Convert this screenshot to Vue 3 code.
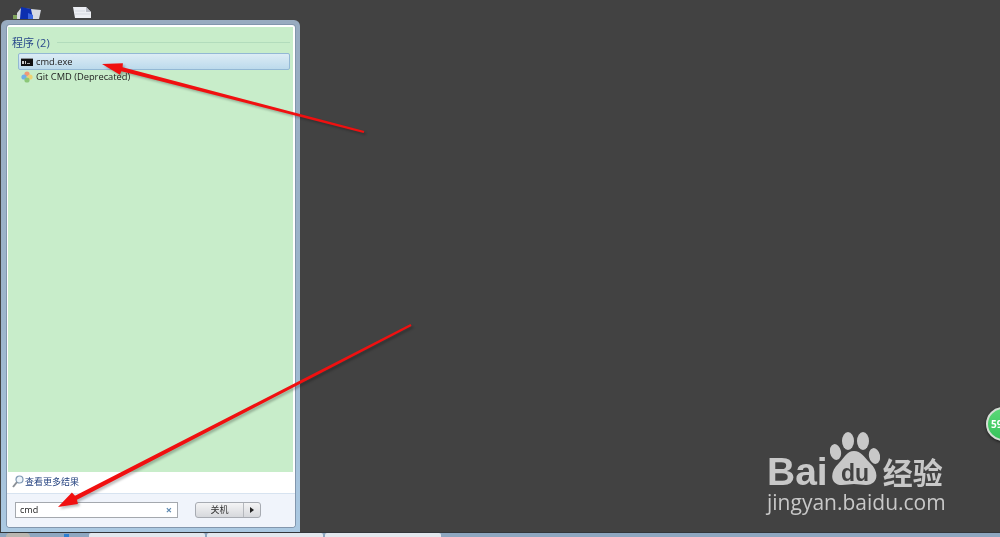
<template>
  <div class="desktop">
    <div class="work">
      <div class="icons">
        <svg width="28" height="13" viewBox="0 0 28 13">
          <rect x="0" y="8" width="4" height="4" fill="#7fa35c" />
          <path d="M4 6 L8 1 L28 3 L26 12 L4 12 Z" fill="#d6dae2" />
          <path d="M8 0 L18 2 L20 12 L7 12 Z" fill="#0c2fb0" />
          <path d="M15 6 L20 8 L20 12 L15 12 Z" fill="#3a66e0" />
        </svg>
        <svg width="18" height="12" viewBox="0 0 18 12">
          <path d="M0 0 L13 0 L18 5 L18 11 L2 11 Z" fill="#eceef3" />
          <path d="M13 0 L18 5 L13 5 Z" fill="#b9bcc6" />
          <path d="M2 4 H12 M2 7 H17" stroke="#d5d8e0" stroke-width="1" />
        </svg>
      </div>

      <div class="start-menu">
        <div class="panel">
          <div class="results">
            <div class="group-head">
              <span>程序 (2)</span>
              <i></i>
            </div>
            <div
              v-for="item in programs"
              :key="item.name"
              class="prog"
              :class="{ selected: item.selected }"
            >
              <svg v-if="item.kind === 'cmd'" width="12" height="8" viewBox="0 0 12 8">
                <rect width="12" height="8" fill="#111" />
                <rect width="12" height="1" fill="#8a8f96" />
                <rect x="1" y="3" width="2" height="3" fill="#ccc" />
                <rect x="4" y="3" width="1" height="3" fill="#ccc" />
                <rect x="6" y="5" width="3" height="1" fill="#aaa" />
              </svg>
              <svg v-else width="12" height="12" viewBox="0 0 12 12">
                <circle cx="6" cy="3" r="2.600" fill="#ef9a78" />
                <circle cx="3" cy="6" r="2.600" fill="#6fb0e8" />
                <circle cx="9" cy="6" r="2.600" fill="#ecd374" />
                <circle cx="6" cy="9" r="2.600" fill="#8cc878" />
              </svg>
              <span>{{ item.name }}</span>
            </div>
          </div>
          <div class="more">
            <svg width="12" height="13" viewBox="0 0 12 13">
              <circle cx="7.500" cy="4.500" r="3.500" fill="#eef4fa" stroke="#7f99b4" stroke-width="1.200" />
              <path d="M5 7 L1 12" stroke="#8a8f96" stroke-width="2" />
            </svg>
            <span>查看更多结果</span>
          </div>
          <div class="search-bar">
            <div class="search-box">
              <span>cmd</span>
              <b>×</b>
            </div>
            <div class="power">
              <span class="power-label">关机</span>
              <span class="power-arrow"></span>
            </div>
          </div>
        </div>
      </div>

      <div class="badge">59</div>

      <div class="watermark">
        <div class="wm-top">
          <span class="wm-bai">Bai</span>
          <svg class="wm-paw" width="50" height="54" viewBox="0 0 50 54">
            <ellipse cx="5.500" cy="20" rx="5.500" ry="8" transform="rotate(-12 5.500 20)" />
            <ellipse cx="18" cy="9" rx="6" ry="9" />
            <ellipse cx="33" cy="9" rx="6" ry="9" />
            <ellipse cx="44.500" cy="24" rx="5.500" ry="8" transform="rotate(-12 44.500 24)" />
            <path d="M24 19 C31 19 34 25 40 31 C50 40 48 53 36 53 C31 53 28 52 24 52 C20 52 17 53 12 53 C0 53 -1 40 9 31 C15 25 17 19 24 19 Z" />
            <text x="25" y="49" text-anchor="middle" class="wm-du">du</text>
          </svg>
          <span class="wm-cn">经验</span>
        </div>
        <div class="wm-url">jingyan.baidu.com</div>
      </div>

      <svg class="arrows" width="1000" height="537" viewBox="0 0 1000 537">
        <polygon points="102,64 122.900,63.200 122.600,67.200 364.300,131 363.700,133 121.400,71.200 119.900,74.800" />
        <polygon points="58,507 71.900,492.500 75,495.800 410.500,324.100 411.500,326 77,499.700 77.900,504.100" />
      </svg>
    </div>

    <div class="taskbar">
      <div class="orb"></div>
      <div class="dot"></div>
      <div class="tabs">
        <div v-for="n in 3" :key="n" class="tab"></div>
      </div>
    </div>
  </div>
</template>

<script setup>
const programs = [
  { name: 'cmd.exe', kind: 'cmd', selected: true },
  { name: 'Git CMD (Deprecated)', kind: 'git', selected: false }
]
</script>

<style>
html, body { margin: 0; background: #424242; }
</style>

<style scoped>
.desktop {
  width: 1000px;
  height: 537px;
  display: flex;
  flex-direction: column;
  overflow: hidden;
  background: #424242;
  filter: blur(0.35px);
  font-family: "Open Sans", "Noto Sans CJK SC", sans-serif;
}
.work {
  position: relative;
  flex: 1;
  border-bottom: 1px solid #33363a;
}
.icons {
  position: absolute;
  left: 13px;
  top: 7px;
  display: flex;
  gap: 32px;
}
.start-menu {
  position: absolute;
  left: 1px;
  top: 20px;
  width: 299px;
  height: 512px;
  box-sizing: border-box;
  padding: 5px 5px 5px 6px;
  border-radius: 6px 6px 0 0;
  background: linear-gradient(#98abc0, #9db6cd 60%, #abc9e2);
}
.panel {
  height: 100%;
  display: flex;
  flex-direction: column;
  border-radius: 3px;
  background: #fff;
  box-shadow: 0 0 0 1px #8296ad;
}
.results {
  flex: 1;
  margin: 2px 2px 0 1px;
  padding: 8px 4px 0 4px;
  background: #c8edca;
}
.group-head {
  display: flex;
  align-items: center;
  gap: 7px;
  height: 14px;
  margin-bottom: 4px;
  font-size: 11px;
  color: #2a4a8c;
}
.group-head i {
  flex: 1;
  height: 1px;
  margin-right: -1px;
  background: #b2dcbc;
}
.prog {
  display: flex;
  align-items: center;
  gap: 3px;
  height: 13px;
  margin-left: 6px;
  padding-left: 3px;
  font-size: 9.3px;
  color: #222;
}
.prog.selected {
  height: 15px;
  margin-right: -1px;
  padding-left: 2px;
  border: 1px solid #93b8d4;
  border-radius: 2px;
  background: linear-gradient(#dcecf5, #bcdaec);
}
.more {
  display: flex;
  align-items: center;
  gap: 1px;
  height: 19px;
  padding: 0 0 2px 5px;
  font-size: 9px;
  color: #23417f;
  background: #fff;
}
.search-bar {
  display: flex;
  align-items: center;
  height: 34px;
  box-sizing: border-box;
  padding: 0 0 2px 8px;
  border-top: 1px solid #d7e3f0;
  border-radius: 0 0 3px 3px;
  background: #f0f4fb;
}
.search-box {
  width: 163px;
  height: 16px;
  box-sizing: border-box;
  display: flex;
  align-items: center;
  justify-content: space-between;
  padding: 0 5px 0 4px;
  border: 1px solid #a4a8ae;
  background: #fff;
  font-size: 9px;
  color: #222;
}
.search-box b {
  font-size: 11px;
  font-weight: 700;
  color: #5b87b0;
}
.power {
  display: flex;
  width: 66px;
  height: 16px;
  margin-left: 17px;
  box-sizing: border-box;
  border: 1px solid #a7abb2;
  border-radius: 3px;
  background: linear-gradient(#f4f4f5, #d6d8dc);
}
.power-label {
  flex: 1;
  text-align: center;
  font-size: 9px;
  line-height: 14px;
  color: #333;
  border-right: 1px solid #b5b8bd;
}
.power-arrow {
  position: relative;
  width: 16px;
}
.power-arrow::after {
  content: "";
  position: absolute;
  left: 6px;
  top: 4px;
  border-left: 4px solid #222;
  border-top: 3px solid transparent;
  border-bottom: 3px solid transparent;
}
.badge {
  position: absolute;
  left: 986px;
  top: 407px;
  width: 34px;
  height: 34px;
  box-sizing: border-box;
  padding-left: 3px;
  border: 2px solid #d5ddd5;
  border-radius: 50%;
  background: linear-gradient(#5ad877, #38c45c);
  box-shadow: 0 1px 3px rgba(0, 0, 0, 0.6);
  font-size: 10px;
  font-weight: 700;
  line-height: 30px;
  color: #fff;
}
.watermark {
  position: absolute;
  left: 767px;
  top: 436px;
  color: #c8c8c8;
}
.wm-top {
  display: flex;
  align-items: flex-end;
  height: 52px;
}
.wm-bai {
  font-family: "Liberation Sans", sans-serif;
  font-size: 39px;
  font-weight: 700;
  line-height: 33px;
}
.wm-paw {
  flex: none;
  fill: #c8c8c8;
  margin-left: 2px;
  margin-bottom: 2px;
}
.wm-du {
  font-family: "Liberation Sans", sans-serif;
  font-size: 23px;
  font-weight: 700;
  fill: #424242;
}
.wm-cn {
  margin-left: 3px;
  font-family: "Noto Sans CJK SC", sans-serif;
  font-size: 30px;
  font-weight: 700;
  line-height: 33px;
}
.wm-url {
  margin-top: 2px;
  font-size: 21px;
  line-height: 24px;
  white-space: nowrap;
}
.arrows {
  position: absolute;
  left: 0;
  top: 0;
  fill: #f01010;
  pointer-events: none;
  filter: drop-shadow(2px 2px 1px rgba(0, 0, 0, 0.25));
}
.taskbar {
  position: relative;
  height: 4px;
  background: #8ea7c0;
}
.orb {
  position: absolute;
  left: 6px;
  top: 0;
  width: 24px;
  height: 4px;
  border-radius: 12px 12px 0 0;
  background: #b9b6b0;
}
.dot {
  position: absolute;
  left: 64px;
  top: 1px;
  width: 5px;
  height: 3px;
  background: #2f7fd0;
}
.tabs {
  position: absolute;
  left: 89px;
  top: 0;
  display: flex;
  gap: 2px;
}
.tab {
  width: 116px;
  height: 4px;
  border-radius: 2px 2px 0 0;
  background: #e3e8ee;
}
</style>
